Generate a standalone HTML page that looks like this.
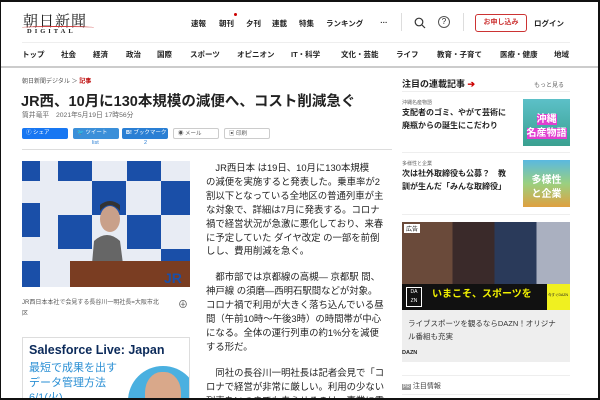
<!DOCTYPE html><html><head><meta charset="utf-8"><style>
*{margin:0;padding:0;box-sizing:border-box}
html,body{width:600px;height:400px;overflow:hidden}
body{background:#fff;font-family:"Liberation Sans","Noto Sans CJK JP",sans-serif;color:#222;position:relative}
.a{position:absolute;white-space:nowrap}
.frame{position:absolute;left:0;top:0;width:600px;height:400px;border:solid #111;border-width:2px 2px 2px 1px;pointer-events:none;z-index:9}
.nav span{position:absolute;font-size:7.5px;font-weight:bold;top:18px}
.cat span{position:absolute;font-size:7.5px;font-weight:bold;top:49px}
.btn{position:absolute;top:128px;height:11px;width:46px;border-radius:2px;font-size:5.5px;color:#fff;line-height:11px;padding-left:4px}
.art p{font-size:9.4px;line-height:13.9px;text-indent:1em;margin-bottom:12px;white-space:nowrap}
</style></head><body>
<div class="frame"></div>
<div class="a" style="left:23px;top:10px;font-family:'Noto Serif CJK SC',serif;font-size:15px;letter-spacing:1px">朝日新聞</div>
<div class="a" style="left:22px;top:26px;width:72px;height:3px;border-top:1px solid #c33;border-radius:50%"></div>
<div class="a" style="left:27px;top:28px;font-family:'Liberation Serif',serif;font-size:6.5px;letter-spacing:3px;font-weight:bold">DIGITAL</div>
<div class="nav">
<span style="left:191px">速報</span><span style="left:219px">朝刊</span><span style="left:246px">夕刊</span><span style="left:272px">連載</span><span style="left:299px">特集</span><span style="left:326px">ランキング</span><span style="left:380px;top:16px">…</span><span style="left:234px;top:13px;width:3px;height:3px;border-radius:50%;background:#c00"></span><span style="left:534px">ログイン</span></div>
<div class="a" style="left:401px;top:13px;width:1px;height:18px;background:#ddd"></div>
<div class="a" style="left:463px;top:13px;width:1px;height:18px;background:#ddd"></div>
<svg class="a" style="left:414px;top:17px" width="12" height="12"><circle cx="5" cy="5" r="3.8" stroke="#333" stroke-width="1.2" fill="none"/><path d="M8 8l3 3" stroke="#333" stroke-width="1.2"/></svg>
<div class="a" style="left:438px;top:16px;width:12px;height:12px;border:1px solid #555;border-radius:50%;font-size:8px;text-align:center;line-height:10px">?</div>
<div class="a" style="left:475px;top:14px;width:52px;height:18px;border:1px solid #c33;border-radius:3px;color:#c33;font-size:7px;font-weight:bold;text-align:center;line-height:16px">お申し込み</div>
<div class="a" style="left:22px;top:42px;width:548px;height:1px;background:#eee"></div>
<div class="cat"><span style="left:22px">トップ</span><span style="left:61px">社会</span><span style="left:93px">経済</span><span style="left:126px">政治</span><span style="left:157px">国際</span><span style="left:190px">スポーツ</span><span style="left:237px">オピニオン</span><span style="left:291px">IT・科学</span><span style="left:341px">文化・芸能</span><span style="left:396px">ライフ</span><span style="left:437px">教育・子育て</span><span style="left:500px">医療・健康</span><span style="left:554px">地域</span></div>
<div class="a" style="left:0;top:66px;width:600px;height:2px;background:#ccc"></div>
<div class="a" style="left:22px;top:76px;font-size:6px;color:#555">朝日新聞デジタル ＞ <span style="color:#b00;font-weight:bold">記事</span></div>
<div class="a" style="left:21px;top:90px;font-size:14.5px;font-weight:bold">JR西、10月に130本規模の減便へ、コスト削減急ぐ</div>
<div class="a" style="left:22px;top:109px;font-size:6.8px;color:#666">筒井竜平　2021年5月19日 17時56分</div>
<div class="btn" style="left:22px;background:#1877f2">ⓕ シェア</div>
<div class="btn" style="left:73px;background:#3a8fd9">🐦 ツイート</div>
<div class="btn" style="left:122px;background:#2a7fd4"><b>B!</b> ブックマーク</div>
<div class="btn" style="left:173px;border:1px solid #ccc;color:#555">◉ メール</div>
<div class="btn" style="left:224px;border:1px solid #ccc;color:#555">▣ 印刷</div>
<div class="a" style="left:92px;top:140px;font-size:5.5px;color:#2a7fd4">list</div>
<div class="a" style="left:144px;top:140px;font-size:5.5px;color:#2a7fd4">2</div>
<div class="a" style="left:22px;top:149px;width:370px;height:1px;background:#ddd"></div>
<svg class="a" style="left:22px;top:161px" width="168" height="126"><rect width="168" height="126" fill="#e8ecf4"/>
<g fill="#1a4fa8"><rect x="0" y="0" width="18" height="20"/><rect x="36" y="0" width="34" height="20"/><rect x="105" y="0" width="34" height="20"/><rect x="0" y="42" width="18" height="34"/><rect x="70" y="20" width="34" height="34"/><rect x="139" y="20" width="29" height="34"/><rect x="36" y="54" width="34" height="34"/><rect x="105" y="54" width="34" height="34"/><rect x="0" y="100" width="18" height="26"/><rect x="139" y="88" width="29" height="38"/></g>
<path d="M68 126 L72 80 Q85 68 98 80 L104 126Z" fill="#666"/><ellipse cx="88" cy="58" rx="10" ry="13" fill="#c9a08a"/><path d="M78 50q10-12 20 0v-6q-10-8-20 0z" fill="#333"/>
<rect x="48" y="100" width="120" height="26" fill="#7a3d22"/><text x="142" y="122" fill="#1a4fa8" font-size="14" font-weight="bold">JR</text></svg>
<div class="a" style="left:22px;top:298px;font-size:6px;color:#555;line-height:11px">JR西日本本社で会見する長谷川一明社長=大阪市北<br>区</div>
<div class="a" style="left:178px;top:296px;font-size:10px;color:#555">⊕</div>
<div class="a" style="left:22px;top:337px;width:168px;height:70px;border:1px solid #ddd;background:#fff;overflow:hidden">
<div style="position:absolute;left:6px;top:5px;font-size:12.5px;color:#0b2a5a;font-weight:bold">Salesforce Live: Japan</div>
<div style="position:absolute;left:6px;top:23px;font-size:11px;color:#2a8fd4;line-height:15px">最短で成果を出す<br>データ管理方法<br>6/1(火)</div>
<div style="position:absolute;left:105px;top:28px;width:70px;height:70px;border-radius:50%;background:#4ab0e0"></div>
<div style="position:absolute;left:122px;top:34px;width:36px;height:46px;border-radius:45%;background:#d9a88a"></div></div>
<div class="a" style="left:206px;top:161px;width:180px;height:239px;overflow:hidden"><div class="art"><p>JR西日本 は19日、10月に130本規模<br>の減便を実施すると発表した。乗車率が2<br>割以下となっている全地区の普通列車が主<br>な対象で、詳細は7月に発表する。コロナ<br>禍で経営状況が急激に悪化しており、来春<br>に予定していた ダイヤ改定 の一部を前倒<br>しし、費用削減を急ぐ。</p><p>都市部では京都線の高槻― 京都駅 間、<br>神戸線 の須磨―西明石駅間などが対象。<br>コロナ禍で利用が大きく落ち込んでいる昼<br>間（午前10時～午後3時）の時間帯が中心<br>になる。全体の運行列車の約1%分を減便<br>する形だ。</p><p>同社の長谷川一明社長は記者会見で「コ<br>ロナで経営が非常に厳しい。利用の少ない<br>列車をいつまでも走らせるのは、事業に貢</p></div></div>
<div class="a" style="left:402px;top:77px;font-size:9px;font-weight:bold">注目の連載記事 <span style="color:#c00">➔</span></div>
<div class="a" style="left:534px;top:80px;font-size:6px;color:#666">もっと見る</div>
<div class="a" style="left:402px;top:91px;width:168px;height:1px;background:#eee"></div>
<div class="a" style="left:402px;top:99px;font-size:5px;color:#666">沖縄名産物語</div>
<div class="a" style="left:402px;top:107px;font-size:8px;font-weight:bold;line-height:12.5px">支配者のゴミ、やがて芸術に<br>廃瓶からの誕生にこだわり</div>
<div class="a" style="left:523px;top:99px;width:47px;height:47px;background:linear-gradient(#5cc0c8,#3aa090);color:#fff;font-size:10px;font-weight:bold;line-height:14px;padding-top:14px;text-align:center"><span style="background:#e040d0">沖縄</span><br><span style="background:#e040d0">名産物語</span></div>
<div class="a" style="left:402px;top:152px;width:168px;height:1px;background:#eee"></div>
<div class="a" style="left:402px;top:160px;font-size:5px;color:#666">多様性と企業</div>
<div class="a" style="left:402px;top:168px;font-size:8px;font-weight:bold;line-height:12.5px">次は社外取締役も公募？　教<br>訓が生んだ「みんな取締役」</div>
<div class="a" style="left:523px;top:160px;width:47px;height:47px;background:linear-gradient(#5ab8e0,#9ad080,#e0a040);color:#fff;font-size:10px;font-weight:bold;line-height:14px;padding-top:14px;text-align:center">多様性<br>と企業</div>
<div class="a" style="left:402px;top:214px;width:168px;height:1px;background:#eee"></div>
<div class="a" style="left:402px;top:222px;width:168px;height:62px;background:linear-gradient(90deg,#6a4a3a 0 30%,#3a2a2a 30% 55%,#2a3a5a 55% 80%,#aab0c0 80%)"></div>
<div class="a" style="left:404px;top:224px;font-size:6px;background:#fff;padding:0 2px">広告</div>
<div class="a" style="left:402px;top:284px;width:168px;height:26px;background:#111"></div>
<div class="a" style="left:406px;top:287px;width:16px;height:20px;border:1px solid #fff;color:#fff;font-size:5px;text-align:center;line-height:9px">DA<br>ZN</div>
<div class="a" style="left:432px;top:285px;font-size:10px;font-weight:bold;color:#f0f000">いまこそ、スポーツを</div>
<div class="a" style="left:547px;top:284px;width:23px;height:26px;background:#f0f020;font-size:3.5px;line-height:6px;padding:8px 1px">今すぐDAZN</div>
<div class="a" style="left:402px;top:310px;width:168px;height:52px;background:#eee"></div>
<div class="a" style="left:408px;top:317px;font-size:7.5px;line-height:13px;color:#333">ライブスポーツを観るならDAZN！オリジナ<br>ル番組も充実</div>
<div class="a" style="left:402px;top:350px;font-size:5.5px;font-weight:bold">DAZN</div>
<div class="a" style="left:402px;top:375px;width:168px;height:1px;background:#eee"></div>
<div class="a" style="left:402px;top:381px;font-size:7px;color:#444"><span style="background:#999;color:#fff;font-size:5px;padding:0 1px">PR</span> 注目情報</div>
<div class="a" style="left:402px;top:394px;width:168px;height:1px;background:#eee"></div>
</body></html>
